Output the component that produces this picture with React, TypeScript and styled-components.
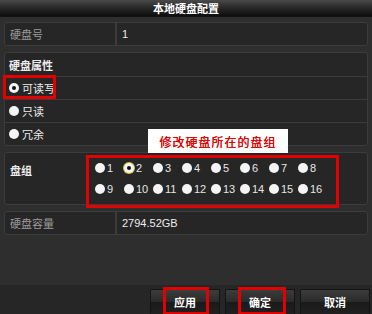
import styled, { createGlobalStyle } from 'styled-components';

const GlobalStyle = createGlobalStyle`
  html, body {
    margin: 0;
    padding: 0;
    background: #2e2e2e;
  }
  * {
    box-sizing: border-box;
  }
`;

const FONT = `"Liberation Sans", "Noto Sans CJK SC", sans-serif`;

const Window = styled.div`
  position: relative;
  width: 372px;
  height: 314px;
  display: flex;
  flex-direction: column;
  background: #2e2e2e;
  font-family: ${FONT};
  font-size: 11px;
  color: #e6e6e6;
  overflow: hidden;
`;

const TitleBar = styled.div`
  height: 17px;
  display: flex;
  align-items: center;
  justify-content: center;
  background: linear-gradient(#4a4a4a 0%, #2a2a2a 45%, #0e0e0e 100%);
  border-bottom: 1px solid #111;
  color: #fff;
  font-weight: bold;
  font-size: 11px;
`;

const Content = styled.div`
  display: flex;
  flex-direction: column;
  gap: 6px;
  padding: 5px 4px 0 4px;
`;

const InfoRow = styled.div`
  height: 24px;
  display: grid;
  grid-template-columns: 110px 1fr;
  background: #262626;
  border: 1px solid #3c3c3c;
  border-radius: 3px;
`;

const Cell = styled.div<{ $muted?: boolean }>`
  display: flex;
  align-items: center;
  padding-left: 5px;
  color: ${(p) => (p.$muted ? '#9a9a9a' : '#ececec')};
  & + & {
    border-left: 2px solid #3c3c3c;
  }
`;

const Panel = styled.div`
  display: flex;
  flex-direction: column;
  background: #262626;
  border: 1px solid #3c3c3c;
  border-radius: 3px;
`;

const PanelRow = styled.div<{ $header?: boolean }>`
  height: 23px;
  display: flex;
  align-items: center;
  gap: 3px;
  padding-left: 4px;
  font-weight: ${(p) => (p.$header ? 'bold' : 'normal')};
  color: #ececec;
  & + & {
    border-top: 1px solid #3c3c3c;
  }
`;

const Radio = styled.span<{ $checked?: boolean; $ring?: string }>`
  position: relative;
  width: 10px;
  height: 10px;
  border-radius: 50%;
  background: #f4f4f4;
  flex-shrink: 0;
  box-shadow: ${(p) => (p.$ring ? `0 0 0 1px ${p.$ring}` : 'none')};
  &::after {
    content: '';
    display: ${(p) => (p.$checked ? 'block' : 'none')};
    position: absolute;
    left: 3px;
    top: 3px;
    width: 4px;
    height: 4px;
    border-radius: 50%;
    background: #111;
  }
`;

const GroupPanel = styled(Panel)`
  height: 53px;
  flex-direction: row;
  align-items: flex-start;
  padding: 9px 0 0 5px;
`;

const GroupLabel = styled.div`
  width: 85px;
  font-weight: bold;
  color: #ececec;
`;

const GroupGrid = styled.div`
  display: grid;
  grid-template-columns: repeat(8, 29px);
  grid-auto-rows: 12px;
  align-content: start;
  row-gap: 9px;
`;

const GroupItem = styled.div`
  display: flex;
  align-items: center;
  gap: 2px;
  height: 12px;
  color: #e6e6e6;
`;

const Spacer = styled.div`
  flex: 1;
`;

const Footer = styled.div`
  height: 29px;
  display: flex;
  justify-content: flex-end;
  align-items: flex-end;
  gap: 5px;
  padding-right: 2px;
  background: #262626;
`;

const Button = styled.div`
  width: 70px;
  height: 25px;
  display: flex;
  align-items: center;
  justify-content: center;
  background: linear-gradient(#3c3c3c 0%, #2a2a2a 50%, #1a1a1a 51%, #202020 100%);
  border: 1px solid #141414;
  border-bottom: none;
  border-radius: 2px 2px 0 0;
  color: #fff;
  font-weight: bold;
`;

const RedBox = styled.div<{ $x: number; $y: number; $w: number; $h: number }>`
  position: absolute;
  left: ${(p) => p.$x}px;
  top: ${(p) => p.$y}px;
  width: ${(p) => p.$w}px;
  height: ${(p) => p.$h}px;
  border: 3px solid #e20000;
  pointer-events: none;
`;

const Note = styled.div`
  position: absolute;
  left: 148px;
  top: 129px;
  width: 140px;
  height: 24px;
  display: flex;
  align-items: center;
  justify-content: center;
  background: #ffffff;
  color: #e00000;
  font-family: "Noto Sans CJK SC", sans-serif;
  font-weight: normal;
  font-size: 12px;
  letter-spacing: 1px;
  text-shadow: 0 0 0.4px #e00000;
`;

const groups = Array.from({ length: 16 }, (_, i) => i + 1);

export default function App() {
  return (
    <Window>
      <GlobalStyle />
      <TitleBar>本地硬盘配置</TitleBar>
      <Content>
        <InfoRow>
          <Cell $muted>硬盘号</Cell>
          <Cell>1</Cell>
        </InfoRow>
        <Panel>
          <PanelRow $header>硬盘属性</PanelRow>
          <PanelRow>
            <Radio $checked />
            可读写
          </PanelRow>
          <PanelRow>
            <Radio />
            只读
          </PanelRow>
          <PanelRow>
            <Radio />
            冗余
          </PanelRow>
        </Panel>
        <GroupPanel>
          <GroupLabel>盘组</GroupLabel>
          <GroupGrid>
            {groups.map((n) => (
              <GroupItem key={n}>
                <Radio $checked={n === 2} $ring={n === 2 ? '#d8c23a' : undefined} />
                {n}
              </GroupItem>
            ))}
          </GroupGrid>
        </GroupPanel>
        <InfoRow>
          <Cell $muted>硬盘容量</Cell>
          <Cell>2794.52GB</Cell>
        </InfoRow>
      </Content>
      <Spacer />
      <Footer>
        <Button>应用</Button>
        <Button>确定</Button>
        <Button>取消</Button>
      </Footer>

      <RedBox $x={3} $y={75} $w={53} $h={24} />
      <Note>修改硬盘所在的盘组</Note>
      <RedBox $x={86} $y={155} $w={253} $h={53} />
      <RedBox $x={163} $y={287} $w={46} $h={28} />
      <RedBox $x={238} $y={287} $w={48} $h={28} />
    </Window>
  );
}
